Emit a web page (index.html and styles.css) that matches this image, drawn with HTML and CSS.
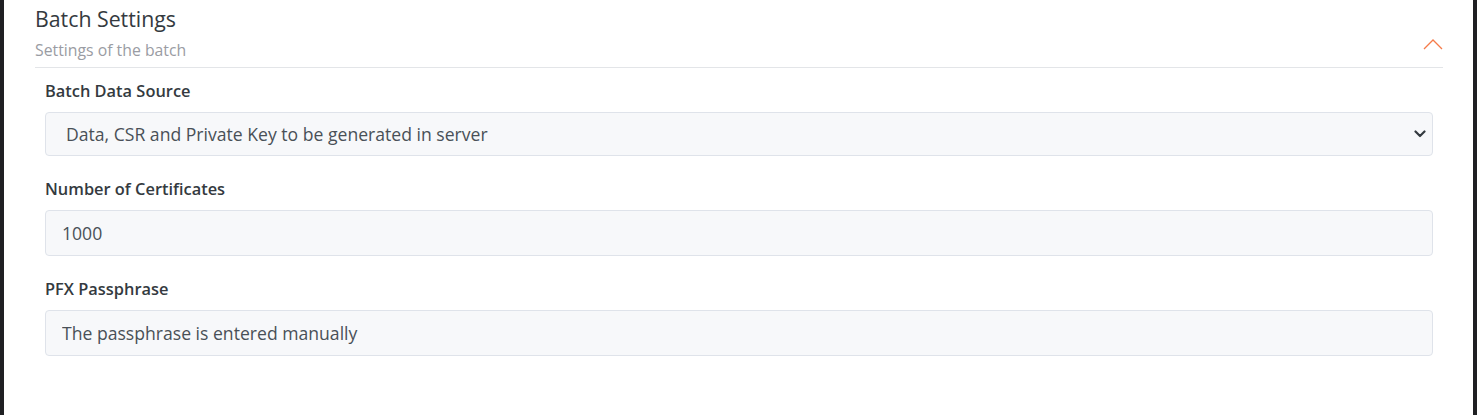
FILE: index.html
```html
<!DOCTYPE html>
<html lang="en">
<head>
<meta charset="utf-8">
<title>Batch Settings</title>
<link rel="stylesheet" href="styles.css">
</head>
<body>
<div class="frame">
  <section class="card">
    <header class="card-head">
      <div class="titles">
        <h2 class="card-title">Batch Settings</h2>
        <p class="card-subtitle">Settings of the batch</p>
      </div>
      <button class="toggle" type="button" aria-label="Collapse">
        <svg width="20" height="11" viewBox="0 0 20 11" fill="none" stroke="#f57b4a" stroke-width="1.3">
          <path d="M1 10 L10 1 L19 10"/>
        </svg>
      </button>
    </header>
    <div class="card-body">
      <div class="field">
        <label class="field-label" for="src">Batch Data Source</label>
        <div class="select-wrap">
          <select id="src" class="control control-select">
            <option>Data, CSR and Private Key to be generated in server</option>
          </select>
          <svg class="select-caret" width="12" height="8" viewBox="0 0 12 8" fill="none" stroke="#343a40" stroke-width="2.2" stroke-linecap="round" stroke-linejoin="round">
            <path d="M1.5 1.5 L6 6 L10.5 1.5"/>
          </svg>
        </div>
      </div>
      <div class="field">
        <label class="field-label" for="num">Number of Certificates</label>
        <input id="num" class="control" type="text" value="1000">
      </div>
      <div class="field">
        <label class="field-label" for="pfx">PFX Passphrase</label>
        <input id="pfx" class="control" type="text" value="The passphrase is entered manually" readonly>
      </div>
    </div>
  </section>
</div>
</body>
</html>
```

FILE: styles.css
```css
* { box-sizing: border-box; }
html, body { margin: 0; padding: 0; background: #fff; }
body { font-family: "Open Sans", "Noto Sans", sans-serif; color: #343a40; }

.frame {
  width: 1477px;
  height: 415px;
  border-left: 4px solid #1f2023;
  border-right: 4px solid #1f2023;
  background: #fff;
  overflow: hidden;
}

.card { padding: 0 30px 0 31px; }

.card-head {
  display: flex;
  justify-content: space-between;
  align-items: flex-end;
  border-bottom: 1px solid #e3e5e8;
  padding-top: 5px;
  padding-bottom: 6px;
}

.card-title {
  margin: 0;
  font-size: 21.3px;
  font-weight: 400;
  line-height: 28px;
  color: #343a40;
}

.card-subtitle {
  margin: 6px 0 0 0;
  font-size: 15.8px;
  line-height: 22px;
  color: #9a9ca3;
}

.toggle {
  border: 0;
  background: none;
  padding: 0;
  margin: 0 0 11px 0;
  width: 20px;
  height: 11px;
  display: flex;
}

.card-body {
  padding: 11px 10px 0 10px;
  display: flex;
  flex-direction: column;
  gap: 21px;
}

.field { display: flex; flex-direction: column; gap: 9px; }

.field-label {
  font-size: 16.4px;
  font-weight: 600;
  line-height: 24px;
  color: #343a40;
}

.select-wrap { position: relative; }

.control {
  display: block;
  width: 100%;
  height: 46px;
  padding: 0 16px;
  font-family: inherit;
  font-size: 17.6px;
  color: #495057;
  background: #f7f8fa;
  border: 1px solid #dfe3ea;
  border-radius: 4px;
  outline: none;
  appearance: none;
  -webkit-appearance: none;
}

.control-select { height: 44px; padding-left: 20px; padding-right: 40px; }

.select-caret {
  position: absolute;
  right: 7px;
  top: 18px;
  pointer-events: none;
}
```
